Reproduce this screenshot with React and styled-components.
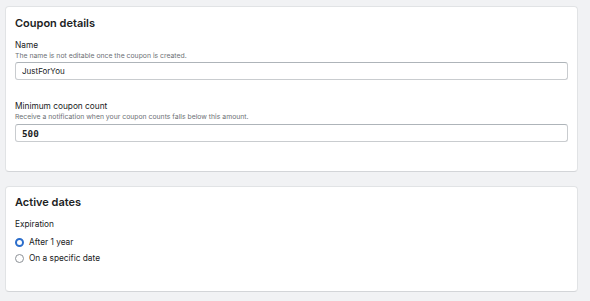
import React from "react";
import styled, { createGlobalStyle } from "styled-components";

const Global = createGlobalStyle`
  html, body { margin: 0; padding: 0; background: #f1f2f4; }
  body { font-family: Inter, "Noto Sans", sans-serif; color: #202223; -webkit-font-smoothing: antialiased; }
  * { box-sizing: border-box; }
`;

const Page = styled.div`
  display: flex;
  flex-direction: column;
  gap: 14px;
  padding: 6px 12px 0 5px;
`;

const Card = styled.section`
  background: #fff;
  border: 1px solid #e1e3e5;
  border-bottom-color: #d3d5d8;
  border-radius: 4px;
  padding: ${(p) => p.$pad};
  display: flex;
  flex-direction: column;
`;

const Title = styled.h2`
  margin: 0;
  font-size: 11px;
  line-height: 15px;
  font-weight: 600;
  color: #202223;
`;

const Field = styled.div`
  display: flex;
  flex-direction: column;
  margin-top: ${(p) => p.$mt}px;
`;

const Label = styled.div`
  font-size: 8.3px;
  line-height: 12px;
  color: #202223;
`;

const Hint = styled.div`
  font-size: 6.85px;
  line-height: 9px;
  color: #6d7175;
`;

const Input = styled.input`
  margin-top: ${(p) => p.$mt}px;
  height: 18px;
  width: 100%;
  border: 1px solid #c9cccf;
  border-top-color: #aeb4b9;
  border-radius: 3px;
  padding: 0 6px;
  font-family: ${(p) => (p.$mono ? '"DejaVu Sans Mono", monospace' : 'Inter, "Noto Sans", sans-serif')};
  font-size: ${(p) => (p.$mono ? "9.3px" : "8px")};
  font-weight: ${(p) => (p.$mono ? 600 : 400)};
  color: #202223;
  background: #fff;
  outline: none;
`;

const RadioList = styled.div`
  display: flex;
  flex-direction: column;
  margin-top: 4px;
`;

const RadioRow = styled.label`
  display: flex;
  align-items: center;
  gap: 5px;
  height: 16px;
  font-size: 8.3px;
  color: #202223;
`;

const Dot = styled.span`
  width: 9px;
  height: 9px;
  border-radius: 50%;
  flex: none;
  border: ${(p) => (p.$on ? "2.5px solid #2c6ecb" : "1px solid #8c9196")};
  background: #fff;
`;

export default function App() {
  return (
    <>
      <Global />
      <Page>
        <Card $pad="9px 9px 29px">
          <Title>Coupon details</Title>
          <Field $mt={8}>
            <Label>Name</Label>
            <Hint>The name is not editable once the coupon is created.</Hint>
            <Input $mt={2} defaultValue="JustForYou" readOnly />
          </Field>
          <Field $mt={20}>
            <Label>Minimum coupon count</Label>
            <Hint>Receive a notification when your coupon counts falls below this amount.</Hint>
            <Input $mt={3} $mono defaultValue="500" readOnly />
          </Field>
        </Card>
        <Card $pad="8px 9px 25px">
          <Title>Active dates</Title>
          <Field $mt={8}>
            <Label>Expiration</Label>
            <RadioList>
              <RadioRow>
                <Dot $on />
                After 1 year
              </RadioRow>
              <RadioRow>
                <Dot />
                On a specific date
              </RadioRow>
            </RadioList>
          </Field>
        </Card>
      </Page>
    </>
  );
}
